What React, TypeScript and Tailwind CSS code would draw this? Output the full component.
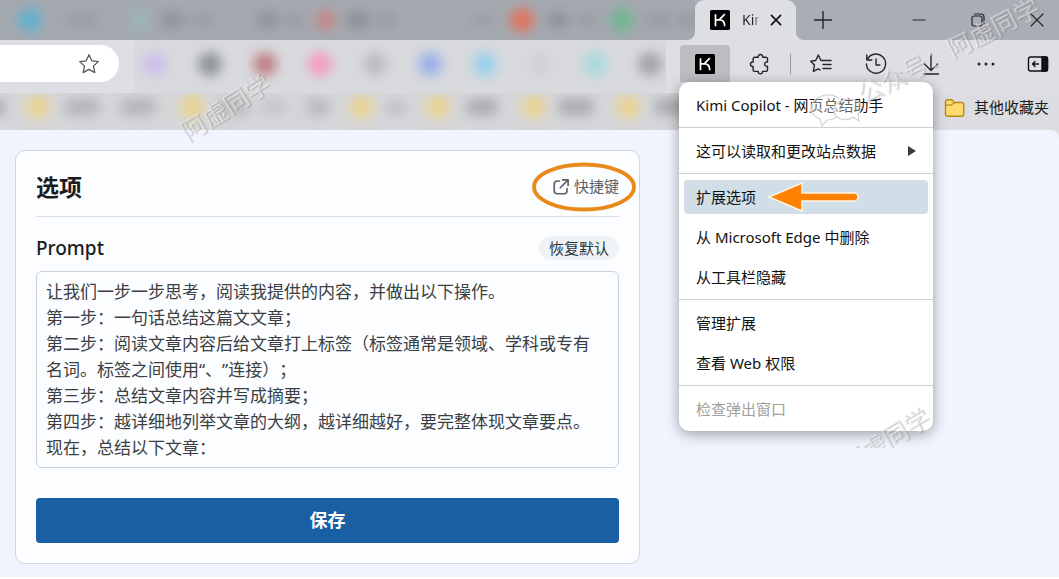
import type { ReactNode } from "react";

const promptText = `让我们一步一步思考，阅读我提供的内容，并做出以下操作。
第一步：一句话总结这篇文文章；
第二步：阅读文章内容后给文章打上标签（标签通常是领域、学科或专有名词。标签之间使用“、”连接）；
第三步：总结文章内容并写成摘要；
第四步：越详细地列举文章的大纲，越详细越好，要完整体现文章要点。
现在，总结以下文章：`;

const tabBlobs = [
  "ml-[18px] w-6 h-6 bg-[#62b1cf]",
  "ml-[22px] w-9 h-3 bg-[#989ca3]",
  "ml-[30px] w-5 h-6 bg-[#9db5b9]",
  "ml-[10px] w-6 h-4 bg-[#8f9399]",
  "ml-[6px] w-6 h-3 bg-[#999da3]",
  "ml-[42px] w-6 h-4 bg-[#90949a]",
  "ml-[6px] w-5 h-3 bg-[#989ca2]",
  "ml-[10px] w-5 h-5 bg-[#c88587]",
  "ml-[10px] w-6 h-4 bg-[#8b9096]",
  "ml-[6px] w-5 h-3 bg-[#969aa0]",
  "ml-[74px] w-6 h-3 bg-[#9a9ea4]",
  "ml-[16px] w-6 h-6 bg-[#df7560]",
  "ml-[14px] w-5 h-4 bg-[#899096]",
  "ml-[8px] w-5 h-3 bg-[#989ca2]",
  "ml-[14px] w-6 h-6 bg-[#72b692]",
  "ml-[12px] w-6 h-3 bg-[#949a9f]",
  "ml-[6px] w-5 h-3 bg-[#949a9f]",
];

const extensionBlobs = [
  "bg-[#cdbdec]",
  "bg-[#8f9498]",
  "bg-[#c08086]",
  "bg-[#f49abf]",
  "bg-[#bbbcbf]",
  "bg-[#98b0ea]",
  "bg-[#97d0ea]",
  "bg-[#d0d1d4]",
  "bg-[#a5dadd]",
  "bg-[#a2a3a7]",
];

const bookmarkBlobs = [
  "-ml-[8px] w-3 h-4 bg-[#9d9ea0]",
  "ml-[22px] w-6 h-6 bg-[#e9d493]",
  "ml-[14px] w-9 h-4 bg-[#b3b4b7]",
  "ml-[20px] w-9 h-4 bg-[#b3b4b7]",
  "ml-[24px] w-6 h-6 bg-[#e9d493]",
  "ml-[14px] w-8 h-4 bg-[#b9babd]",
  "ml-[12px] w-6 h-3 bg-[#c2c3c6]",
  "ml-[20px] w-6 h-4 bg-[#b6b7ba]",
  "ml-[20px] w-6 h-6 bg-[#e9d493]",
  "ml-[12px] w-5 h-3 bg-[#bcbdc0]",
  "ml-[20px] w-6 h-6 bg-[#e9d493]",
  "ml-[16px] w-8 h-4 bg-[#a9aaad]",
  "ml-[24px] w-6 h-6 bg-[#e9d493]",
  "ml-[12px] w-9 h-4 bg-[#a9aaad]",
  "ml-[22px] w-6 h-6 bg-[#e9d493]",
  "ml-[14px] w-9 h-4 bg-[#a9aaad]",
];

function KimiLogo() {
  return (
    <svg viewBox="0 0 20 20" className="size-5 shrink-0" aria-hidden="true">
      <rect width="20" height="20" rx="1.5" fill="#000" />
      <path d="M5.500 4.200v12M14.800 4.200l-5.600 5.600H5.500M8.200 9.800h1.500c3.400 0 5 1.800 5 6.400" fill="none" stroke="#fff" strokeWidth="1.700" />
    </svg>
  );
}

function LineIcon({ children, className = "size-6" }: { children: ReactNode; className?: string }) {
  return (
    <svg
      viewBox="0 0 24 24"
      className={className}
      fill="none"
      stroke="currentColor"
      strokeWidth="1.4"
      strokeLinecap="round"
      strokeLinejoin="round"
      aria-hidden="true"
    >
      {children}
    </svg>
  );
}

function ToolButton({ label, children }: { label: string; children: ReactNode }) {
  return (
    <button type="button" aria-label={label} className="flex h-9 w-[55px] items-center justify-center text-[#24262a]">
      {children}
    </button>
  );
}

function MenuItem({ children, active = false, disabled = false }: { children: ReactNode; active?: boolean; disabled?: boolean }) {
  return (
    <button
      type="button"
      role="menuitem"
      disabled={disabled}
      className={
        "relative mx-[5px] my-[3px] flex h-[34px] items-center rounded px-3 text-left " +
        (active ? "bg-[#d1dee7] " : "") +
        (disabled ? "text-[#a0a0a0]" : "text-[#111]")
      }
    >
      {children}
    </button>
  );
}

function MenuGroup({ children }: { children: ReactNode }) {
  return <div className="flex flex-col pt-[3px] pb-[2px]">{children}</div>;
}

function ExtensionMenu() {
  return (
    <div
      role="menu"
      className="absolute top-full left-0 z-20 flex w-[254px] flex-col divide-y divide-[#cfcfcf] rounded-[10px] bg-white text-[15px] leading-5 shadow-[0_3px_14px_rgba(0,0,0,0.36)]"
    >
      <MenuGroup>
        <MenuItem>Kimi Copilot - 网页总结助手</MenuItem>
      </MenuGroup>
      <MenuGroup>
        <MenuItem>
          <span className="flex-1">这可以读取和更改站点数据</span>
          <svg viewBox="0 0 8 10" className="h-[10px] w-2" aria-hidden="true">
            <path d="M0 0l8 5-8 5z" fill="#3c3c3c" />
          </svg>
        </MenuItem>
      </MenuGroup>
      <MenuGroup>
        <MenuItem active>
          扩展选项
          <svg viewBox="0 0 92 32" className="absolute left-[83px] h-8 w-[92px]" aria-hidden="true">
            <path
              d="M2 16L35 2v10H87a4 4 0 0 1 0 8H35V30z"
              fill="#fd8204"
              stroke="#fff3e4"
              strokeWidth="1.5"
            />
          </svg>
        </MenuItem>
        <MenuItem>从 Microsoft Edge 中删除</MenuItem>
        <MenuItem>从工具栏隐藏</MenuItem>
      </MenuGroup>
      <MenuGroup>
        <MenuItem>管理扩展</MenuItem>
        <MenuItem>查看 Web 权限</MenuItem>
      </MenuGroup>
      <MenuGroup>
        <MenuItem disabled>检查弹出窗口</MenuItem>
      </MenuGroup>
    </div>
  );
}

function TabStrip() {
  return (
    <div className="flex h-10 bg-[#a9adb5]">
      <div className="min-w-0 flex-1 overflow-hidden bg-[#a5a9b0]">
        <div className="flex h-full items-center blur-[6px]">
          {tabBlobs.map((blob, i) => (
            <span key={i} className={"shrink-0 rounded-full " + blob} />
          ))}
        </div>
      </div>
      <div className="relative flex w-[101px] items-center rounded-t-[9px] bg-[#dddfe4] pl-[15px]">
        <svg viewBox="0 0 8 8" className="absolute bottom-0 -left-2 size-2" aria-hidden="true">
          <path d="M8 0v8H0a8 8 0 0 0 8-8z" fill="#dddfe4" />
        </svg>
        <svg viewBox="0 0 8 8" className="absolute -right-2 bottom-0 size-2" aria-hidden="true">
          <path d="M0 0v8h8a8 8 0 0 1-8-8z" fill="#dddfe4" />
        </svg>
        <KimiLogo />
        <span className="ml-3 w-[18px] overflow-hidden bg-linear-to-r from-[#222] from-60% to-[#dddfe4] bg-clip-text text-sm whitespace-nowrap text-transparent">
          Kimi
        </span>
        <button type="button" aria-label="关闭标签页" className="ml-[5px] text-[#111]">
          <LineIcon className="size-[22px]">
            <path d="M7 7l10 10M17 7L7 17" strokeWidth="1.8" />
          </LineIcon>
        </button>
      </div>
      <button type="button" aria-label="新建标签页" className="flex w-[54px] items-center justify-center text-[#24262a]">
        <LineIcon>
          <path d="M12 3.500v17M3.500 12h17" />
        </LineIcon>
      </button>
      <div className="ml-[39px] flex text-[#24262a]">
        <button type="button" aria-label="最小化" className="flex w-[60px] items-center justify-center">
          <LineIcon>
            <path d="M6 12h12" strokeWidth="1.2" />
          </LineIcon>
        </button>
        <button type="button" aria-label="还原" className="flex w-[58px] items-center justify-center">
          <LineIcon>
            <rect x="6" y="8" width="10" height="10" rx="2" strokeWidth="1.2" />
            <path d="M8.500 6H15a3 3 0 0 1 3 3v6.500" strokeWidth="1.2" />
          </LineIcon>
        </button>
        <button type="button" aria-label="关闭" className="flex w-[52px] items-center justify-center pl-2">
          <LineIcon>
            <path d="M6 6l12 12M18 6L6 18" strokeWidth="1.2" />
          </LineIcon>
        </button>
      </div>
    </div>
  );
}

function Toolbar() {
  return (
    <div className="flex h-[53px] items-start bg-[#dddfe4]">
      <div className="mt-[5px] flex h-[37px] w-[119px] shrink-0 items-center justify-end rounded-r-full bg-white pr-[18px]">
        <button type="button" aria-label="收藏此页" className="text-[#55575b]">
          <LineIcon>
            <path
              d="M12 2.800l2.800 6 6.500.8-4.800 4.500 1.300 6.500-5.800-3.200-5.800 3.200 1.300-6.500-4.800-4.500 6.500-.8z"
              strokeWidth="1.300"
            />
          </LineIcon>
        </button>
      </div>
      <div className="ml-[15px] h-full min-w-0 flex-1 overflow-hidden bg-[#d9dade]">
        <div className="flex h-[48px] items-center justify-between pr-1 pl-[9px] blur-[6px]">
          {extensionBlobs.map((blob) => (
            <span key={blob} className={"size-6 shrink-0 rounded-full " + blob} />
          ))}
        </div>
      </div>
      <div className="relative mt-[5px] ml-[13px]">
        <button
          type="button"
          aria-label="Kimi Copilot"
          aria-haspopup="menu"
          className="ml-px flex h-[37px] w-[50px] items-center justify-center rounded-t bg-[#bbbdc1]"
        >
          <KimiLogo />
        </button>
        <ExtensionMenu />
      </div>
      <div className="mt-[6px] ml-[2px] flex items-center">
        <ToolButton label="扩展">
          <LineIcon>
            <path d="M6.800 5.200h3.400c-.5-3.600 5-3.600 4.500 0h3.100a1.700 1.700 0 0 1 1.700 1.700v3.200c-3.800-.6-3.800 4.700 0 4.200v3.400a1.700 1.700 0 0 1-1.700 1.700h-3.300c.5 3.300-4.600 3.300-4.300 0H6.800a1.700 1.700 0 0 1-1.700-1.700v-3.300c-3.600.5-3.600-4.800 0-4.300V6.900a1.700 1.700 0 0 1 1.700-1.700z" />
          </LineIcon>
        </ToolButton>
        <span className="ml-[3px] h-5 w-px bg-[#97999d]" />
        <div className="ml-[2px] flex">
          <ToolButton label="收藏夹">
            <LineIcon>
              <path d="M14.500 8.500H12L9.300 3 6.700 8.500l-5 .7 3.700 3.900-1 6.300 4.900-2.600 2 1.200M14.500 8.500H22M14 12.500h8M14 16.500h8" />
            </LineIcon>
          </ToolButton>
          <ToolButton label="历史记录">
            <LineIcon>
              <path d="M2.800 3v5h5M3.100 8A9.600 9.600 0 1 1 2.400 12M12 7v6h4" />
            </LineIcon>
          </ToolButton>
          <ToolButton label="下载">
            <LineIcon>
              <path d="M12 2.500V18M5.500 12l6.500 6.500 6.500-6.500M4.500 22h15" />
            </LineIcon>
          </ToolButton>
          <ToolButton label="设置及其他">
            <LineIcon>
              <g fill="currentColor" stroke="none">
                <circle cx="5" cy="12" r="1.500" />
                <circle cx="12" cy="12" r="1.500" />
                <circle cx="19" cy="12" r="1.500" />
              </g>
            </LineIcon>
          </ToolButton>
          <button type="button" aria-label="边栏" className="flex h-9 w-[46px] items-center justify-center pl-1 text-[#111]">
            <LineIcon>
              <rect x="2.500" y="5" width="19" height="14" rx="2" />
              <path d="M16 5h4a1.500 1.500 0 0 1 1.500 1.500v11A1.500 1.500 0 0 1 20 19h-4z" fill="currentColor" />
              <path d="M12.500 12H6.500M9 9.500L6.500 12 9 14.500" />
            </LineIcon>
          </button>
        </div>
      </div>
    </div>
  );
}

function BookmarksBar() {
  return (
    <div className="flex h-[37px] bg-[#dcdde1]">
      <div className="min-w-0 flex-1 overflow-hidden bg-[#d5d6d9]">
        <div className="flex h-7 items-center blur-[6px]">
          {bookmarkBlobs.map((blob, i) => (
            <span key={i} className={"shrink-0 rounded-full " + blob} />
          ))}
        </div>
      </div>
      <a href="#favorites" className="flex h-[29px] items-center gap-2 px-[10px] text-[15px] text-[#1c1c1c]">
        <svg viewBox="0 0 22 20" className="h-5 w-[22px]" aria-hidden="true">
          <path d="M1.500 3.500A1.700 1.700 0 0 1 3.200 1.800h4.500l2.800 2.700H18a1.700 1.700 0 0 1 1.700 1.700v10.300a1.700 1.700 0 0 1-1.700 1.700H3.200a1.700 1.700 0 0 1-1.700-1.700z" fill="#fedb71" stroke="#b98a10" strokeWidth="1.400" />
          <path d="M1.500 7.200H7l3.500-2.700" fill="none" stroke="#b98a10" strokeWidth="1.200" />
        </svg>
        其他收藏夹
      </a>
    </div>
  );
}

function OptionsCard() {
  return (
    <form className="w-[625px] max-w-full rounded-[10px] border border-[#cfd6df] bg-[#fbfdfe] p-5 pt-0">
      <header className="flex h-[66px] items-center justify-between border-b border-[#d9dfe5] pt-[6px]">
        <h1 className="text-[23px] leading-8 font-bold text-[#1a1c20]">选项</h1>
        <a href="#shortcuts" className="relative flex items-center gap-1 text-[15px] text-[#5d6065]">
          <LineIcon className="size-[18px]">
            <path d="M10 4H7a4 4 0 0 0-4 4v9a4 4 0 0 0 4 4h9a4 4 0 0 0 4-4v-3M14 2.500h7.500V10M21 3L11 13" strokeWidth="2.200" />
          </LineIcon>
          快捷键
          <svg viewBox="0 0 104 50" className="absolute -left-5 h-[50px] w-[104px] max-w-none" aria-hidden="true">
            <ellipse cx="52" cy="25" rx="50" ry="22.500" fill="none" stroke="#e98a1c" strokeWidth="3.800" />
          </svg>
        </a>
      </header>
      <div className="flex h-[54px] items-center justify-between pt-2">
        <label htmlFor="prompt" className="text-[19px] font-medium text-[#1a1c20]">
          Prompt
        </label>
        <button type="button" className="h-6 rounded-full bg-[#f0f3f6] px-[10px] text-[15px] leading-6 text-[#2d333b]">
          恢复默认
        </button>
      </div>
      <textarea
        id="prompt"
        rows={7}
        defaultValue={promptText}
        className="block w-full resize-none overflow-hidden rounded-md border border-[#c9d2da] bg-transparent pt-[7px] pr-4 pb-[6px] pl-[9px] text-[17px] leading-[26px] text-[#3b3e43] outline-none [text-spacing-trim:space-all]"
      />
      <button type="submit" className="mt-[30px] h-[45px] w-full rounded bg-[#195fa3] text-[18px] font-bold text-white">
        保存
      </button>
    </form>
  );
}

function Watermark({ className, children }: { className: string; children: ReactNode }) {
  return (
    <span
      aria-hidden="true"
      className={
        "pointer-events-none absolute text-[25px] leading-6 whitespace-nowrap text-white/45 [text-shadow:1px_1px_1px_rgba(110,110,110,0.38)] " +
        className
      }
    >
      {children}
    </span>
  );
}

export default function App() {
  return (
    <div
      lang="zh-CN"
      className="relative flex min-h-screen flex-col overflow-hidden bg-[#dcdde1] font-['Noto_Sans','Noto_Sans_CJK_SC',sans-serif]"
    >
      <TabStrip />
      <Toolbar />
      <BookmarksBar />
      <main className="flex-1 rounded-tr-lg border-b-2 border-white bg-[#f0f4fe] px-[15px] pt-5 pb-3">
        <OptionsCard />
      </main>
      <Watermark className="top-[95px] left-[175px] z-30 -rotate-32">阿虚同学</Watermark>
      <Watermark className="top-[38px] right-[11px] z-30 -rotate-27">公众号：阿虚同学</Watermark>
      <div className="pointer-events-none absolute top-[388px] right-[125px] z-30 h-[60px] w-[100px] overflow-hidden">
        <Watermark className="top-[40px] left-0 -rotate-31">阿虚同学</Watermark>
      </div>
      <svg viewBox="0 0 54 40" className="pointer-events-none absolute top-[91px] right-[196px] z-30 h-10 w-[54px]" aria-hidden="true">
        <g fill="#fff" fillOpacity="0.35" stroke="#d4d4d4" strokeWidth="1.200">
          <path d="M30 8C24 0 3 4 2 17c0 6 4 9 9 11l2 7 5-6c4 0 7-1 10-3" />
          <path d="M52 15c-2-10-24-9-27 2-2 10 10 15 19 9l6 4-1-7c2-2 3-5 3-8z" />
        </g>
      </svg>
    </div>
  );
}
